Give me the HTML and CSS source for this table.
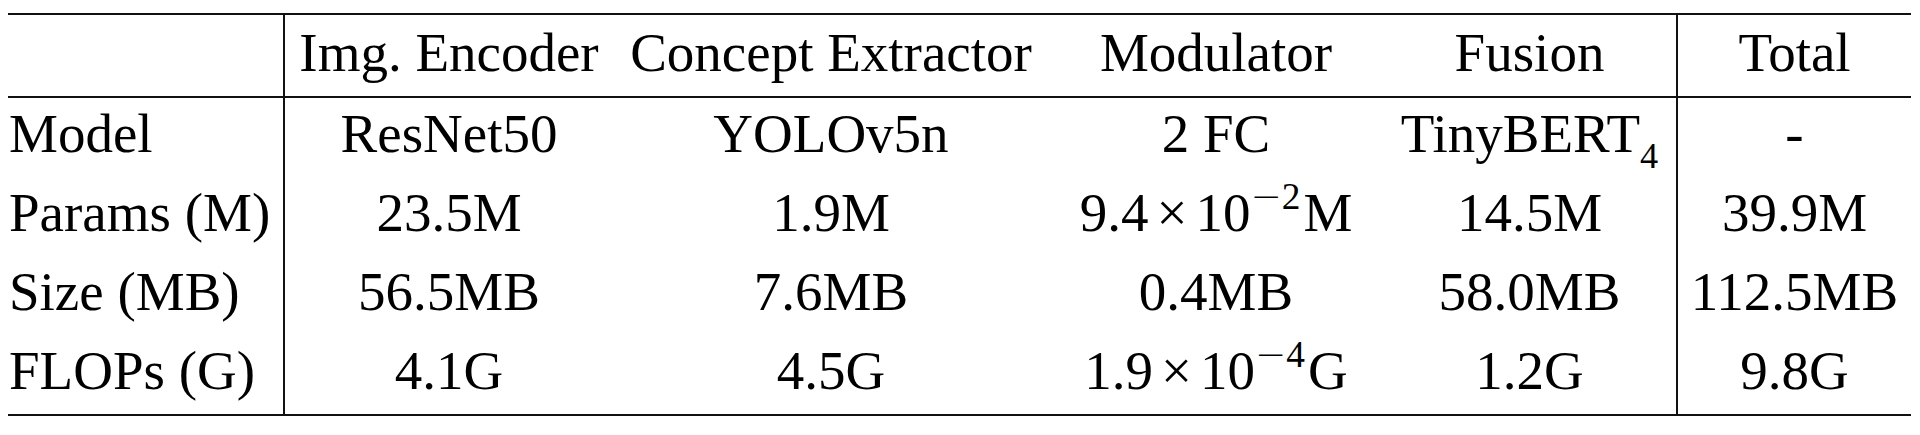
FILE: index.html
```html
<!DOCTYPE html>
<html lang="en">
<head>
<meta charset="utf-8">
<title>Model components</title>
<link rel="stylesheet" href="styles.css">
</head>
<body>
<div class="tbl">
  <div class="c lab hd"></div>
  <div class="c hd">Img. Encoder</div>
  <div class="c hd">Concept Extractor</div>
  <div class="c hd">Modulator</div>
  <div class="c hd sep">Fusion</div>
  <div class="c hd">Total</div>

  <div class="c lab">Model</div>
  <div class="c">ResNet50</div>
  <div class="c">YOLOv5n</div>
  <div class="c">2 FC</div>
  <div class="c sep">TinyBERT<sub class="sb">4</sub></div>
  <div class="c">-</div>

  <div class="c lab">Params (M)</div>
  <div class="c">23.5M</div>
  <div class="c">1.9M</div>
  <div class="c">9.4<span class="op">×</span>10<sup class="sp"><span class="mn">−</span>2</sup>M</div>
  <div class="c sep">14.5M</div>
  <div class="c">39.9M</div>

  <div class="c lab">Size (MB)</div>
  <div class="c">56.5MB</div>
  <div class="c">7.6MB</div>
  <div class="c">0.4MB</div>
  <div class="c sep">58.0MB</div>
  <div class="c">112.5MB</div>

  <div class="c lab">FLOPs (G)</div>
  <div class="c">4.1G</div>
  <div class="c">4.5G</div>
  <div class="c">1.9<span class="op">×</span>10<sup class="sp"><span class="mn">−</span>4</sup>G</div>
  <div class="c sep">1.2G</div>
  <div class="c">9.8G</div>
</div>
</body>
</html>
```

FILE: styles.css
```css
html, body {
  margin: 0;
  padding: 0;
  background: #ffffff;
}

body {
  font-family: "Liberation Serif", "Times New Roman", serif;
  color: #000000;
}

.tbl {
  display: grid;
  grid-template-columns: 277px 328px 436px 334px 295px 233px;
  grid-auto-rows: 79px;
  grid-template-rows: 83px;
  margin: 13px 0 0 8px;
  width: 1903px;
  border-top: 2px solid #111;
  border-bottom: 2px solid #111;
}

.c {
  box-sizing: border-box;
  font-size: 55px;
  line-height: 61px;
  padding-top: 5px;
  text-align: center;
  white-space: nowrap;
}

.c.hd {
  padding-top: 7px;
  border-bottom: 2px solid #111;
}

.c.lab {
  text-align: left;
  padding-left: 1px;
  border-right: 2px solid #111;
}

.c.sep {
  border-right: 2px solid #111;
}

.op {
  margin: 0 8px;
}

.sp {
  font-size: 0.68em;
  line-height: 0;
  vertical-align: 22px;
  margin-right: 3px;
}

.mn {
  font-family: "DejaVu Sans", sans-serif;
  font-weight: 300;
}

.sb {
  font-size: 0.66em;
  line-height: 0;
  vertical-align: -16px;
}
```
